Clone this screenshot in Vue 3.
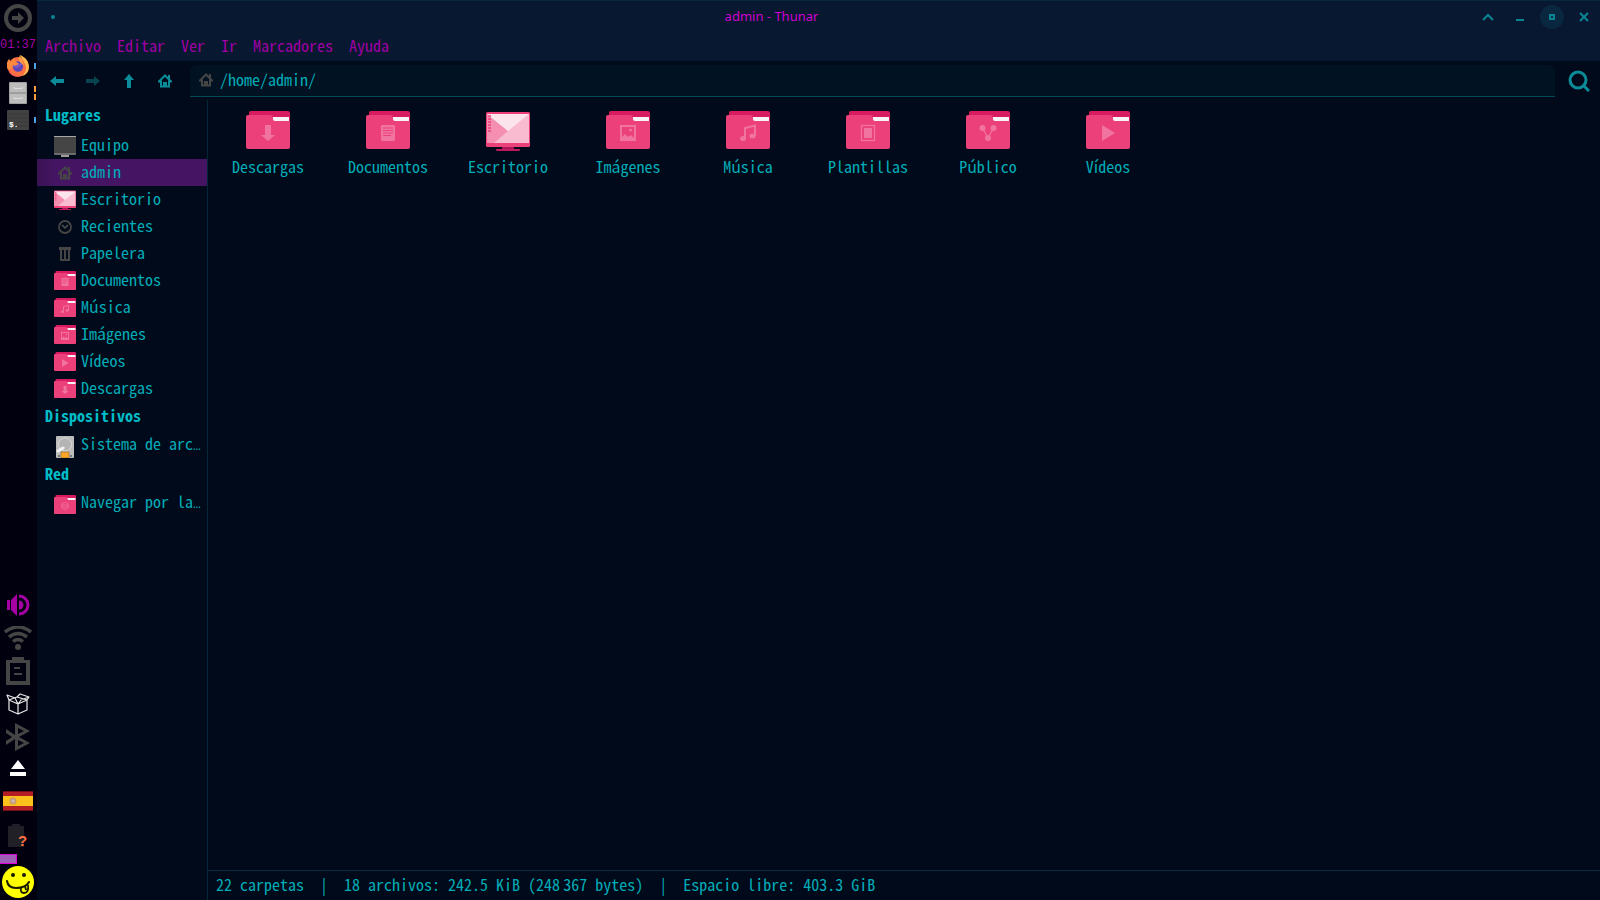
<template>
  <div class="desktop">
    <svg class="sprite" aria-hidden="true">
      <symbol id="folder" viewBox="0 0 44 40">
        <path d="M3 2q0-2 2-2h37q2 0 2 2v12H3z" fill="#d81b60" />
        <path d="M25 6h18v6H27z" fill="#f8f3f6" />
        <path d="M0 6q0-2 2-2h22q2 0 3 2v2q0 2 2 2h13q2 0 2 1v25q0 2-2 2H2q-2 0-2-2z" fill="#ec407a" />
      </symbol>
      <symbol id="g-descargas" viewBox="0 0 44 40">
        <path d="M19 14h6v10h4l-7 6-7-6h4z" fill="#f0749f" />
      </symbol>
      <symbol id="g-documentos" viewBox="0 0 44 40">
        <rect x="15" y="14" width="14" height="16" rx="1" fill="#f0749f" />
        <path d="M17 17h10M17 19.500h10M17 22h10M17 24.500h8" stroke="#ec407a" />
      </symbol>
      <symbol id="g-imagenes" viewBox="0 0 44 40">
        <path d="M14 14h16v16H14zM16 16v10l3-3 3 3 3-2 3 3V16z" fill="#f0749f" fill-rule="evenodd" />
        <circle cx="24.500" cy="19" r="1.500" fill="#f0749f" />
      </symbol>
      <symbol id="g-musica" viewBox="0 0 44 40">
        <path d="M19 27V17l10-2.500V25" fill="none" stroke="#f0749f" stroke-width="2" />
        <ellipse cx="17" cy="27.500" rx="3" ry="2.500" fill="#f0749f" />
        <ellipse cx="26.500" cy="25" rx="3.200" ry="2.500" fill="#f0749f" />
      </symbol>
      <symbol id="g-plantillas" viewBox="0 0 44 40">
        <rect x="15.500" y="14.500" width="13" height="15" fill="none" stroke="#f0749f" stroke-width="1.300" />
        <rect x="18" y="17" width="8" height="10" fill="#f0749f" />
      </symbol>
      <symbol id="g-publico" viewBox="0 0 44 40">
        <path d="M16.500 17L22 27l5.500-10" fill="none" stroke="#f0749f" stroke-width="1.200" />
        <g fill="#f0749f">
          <circle cx="16.500" cy="17" r="3" />
          <circle cx="27.500" cy="17" r="3" />
          <circle cx="22" cy="27" r="3" />
        </g>
      </symbol>
      <symbol id="g-videos" viewBox="0 0 44 40">
        <path d="M16 14l13 8-13 8z" fill="#f0749f" />
      </symbol>
      <symbol id="g-red" viewBox="0 0 44 40">
        <circle cx="22" cy="22" r="7" fill="none" stroke="#f0749f" stroke-width="1.500" />
        <path d="M15 20h14M15 24h14" stroke="#f0749f" stroke-width="1.500" />
      </symbol>
      <symbol id="desktop" viewBox="0 0 44 40">
        <rect x="10" y="38" width="24" height="2" rx="1" fill="#c2185b" />
        <rect x="16" y="35" width="12" height="3" fill="#ad1457" />
        <rect y="1" width="44" height="35" rx="1.500" fill="#ec407a" />
        <path d="M1 3h42v29H1z" fill="#f8bbd0" />
        <path d="M1 3l21 17L8 32H1z" fill="#f48fb1" />
        <path d="M1 3h42L22 20z" fill="#fce4ec" />
        <path d="M2 5h3M2 8h3M2 11h3M2 14h3M2 17h3M2 20h3" stroke="#ec407a" stroke-width="1.500" />
      </symbol>
      <symbol id="computer" viewBox="0 0 22 22">
        <rect y="1" width="22" height="19" rx="1" fill="#6d6d6d" />
        <path d="M0 1h22v1H0z" fill="#a8a8a8" />
        <path d="M0 2h22v16H0z" fill="#454545" />
        <path d="M7 20h8v2H7z" fill="#9e9e9e" />
      </symbol>
      <symbol id="home" viewBox="0 0 14 14">
        <path d="M7 1.500L1 7.500h2v5h3V9h2v3.500h3v-5h2z" fill="none" stroke="currentColor" stroke-width="2" />
        <path d="M10 1h2v4h-2z" fill="currentColor" />
      </symbol>
      <symbol id="recent" viewBox="0 0 14 14">
        <circle cx="7" cy="7" r="6" fill="none" stroke="currentColor" stroke-width="1.800" />
        <path d="M4 5l3 3 3-3" fill="none" stroke="currentColor" stroke-width="1.800" />
      </symbol>
      <symbol id="trash" viewBox="0 0 14 14">
        <path d="M1 0h12v3H1zM2 3h2v9h2V3h2v9h2V3h2v11H2z" fill="currentColor" />
      </symbol>
      <symbol id="disk" viewBox="0 0 22 22">
        <rect x="2" width="18" height="22" rx="1" fill="#bdbdbd" />
        <circle cx="11" cy="8.500" r="6.500" fill="#b4b4b4" stroke="#d9d9d9" />
        <path d="M4 15l5-3" stroke="#f1f1f1" stroke-width="3" stroke-linecap="round" />
        <rect x="7" y="16" width="8" height="6" fill="#ffa726" stroke="#8b6325" stroke-width=".6" />
        <path d="M4 19h2v2H4zM16 19h2v2h-2z" fill="#777" />
      </symbol>
    </svg>

    <aside class="panel">
      <button class="launcher" aria-label="Aplicaciones">
        <svg width="28" height="28" viewBox="0 0 28 28">
          <circle cx="14" cy="14" r="12" fill="none" stroke="#454545" stroke-width="4" />
          <path d="M8 12h6V8l6 6-6 6v-4H8z" fill="#454545" />
        </svg>
      </button>
      <time class="clock">01:37</time>

      <button class="task" aria-label="Firefox">
        <svg width="22" height="22" viewBox="0 0 22 22">
          <circle cx="11" cy="12" r="10" fill="#ff7043" />
          <path d="M1 15A10 10 0 0 1 2 4l2 3 3-4 1 4 4 2-6 4z" fill="#ff8a3d" />
          <path d="M13 0c5 2 9 6 9 12 0 5-3 8-7 9 4-4 5-8 3-12z" fill="#ffb74d" />
          <circle cx="11" cy="11.500" r="5.200" fill="#5e45b8" />
          <path d="M6 9c3-2 6 0 9 0l-3 3c-2 1-4 1-6-1z" fill="#8258c6" />
          <path d="M4 7l4-1 4 3-5 2z" fill="#ff8a3d" />
          <path d="M13 0q-2 4 0 7l4 4z" fill="#ffa143" />
          <path d="M1 14c2 5 7 8 12 7-5 2-11-1-12-7z" fill="#ff4f5e" />
        </svg>
        <span class="marks"><i class="mark blue"></i></span>
      </button>
      <button class="task" aria-label="Archivos">
        <svg width="22" height="22" viewBox="0 0 22 22">
          <rect x="2" width="18" height="22" rx="1" fill="#9e9e9e" />
          <path d="M3 1h16v9H3zM3 12h16v9H3z" fill="#bdbdbd" />
          <path d="M7 5v1.500h8V5M7 15v1.500h8V15" fill="none" stroke="#dedede" />
        </svg>
        <span class="marks"><i class="mark orange"></i><i class="mark orange"></i></span>
      </button>
      <button class="task" aria-label="Terminal">
        <svg width="22" height="20" viewBox="0 0 22 20">
          <rect width="22" height="20" rx="1" fill="#424242" />
          <path d="M0 4h22M0 8h22M0 12h22M0 16h22" stroke="#393939" />
          <text x="2" y="17" class="prompt">$.</text>
        </svg>
        <span class="marks"><i class="mark blue"></i></span>
      </button>

      <div class="tray">
        <button class="tray-item" aria-label="Volumen">
          <svg width="24" height="24" viewBox="0 0 24 24">
            <path d="M1 7h3v10H1zM5 7l6-6v22l-6-6z" fill="#a400a4" />
            <path d="M13 3a9 9 0 0 1 0 18" fill="none" stroke="#a400a4" stroke-width="3" />
            <path d="M13 7.500a4.500 4.500 0 0 1 0 9z" fill="#a400a4" />
          </svg>
        </button>
        <button class="tray-item" aria-label="Wi-Fi">
          <svg width="28" height="24" viewBox="0 0 28 24">
            <g fill="none" stroke="#454545" stroke-width="3.500">
              <path d="M1 6q13-10 26 0" />
              <path d="M5 11q9-7 18 0" />
              <path d="M9 15.500q5-4 10 0" />
            </g>
            <circle cx="14" cy="21" r="3" fill="#454545" />
          </svg>
        </button>
        <button class="tray-item" aria-label="Portapapeles">
          <svg width="24" height="28" viewBox="0 0 24 28">
            <path d="M6 0h12v3h6v25H0V3h6zM4 6v18h16V6z" fill="#454545" fill-rule="evenodd" />
            <path d="M8 11h6M8 17h8" stroke="#454545" stroke-width="2" />
          </svg>
        </button>
        <button class="tray-item" aria-label="Paquetes">
          <svg width="24" height="22" viewBox="0 0 24 22" fill="none" stroke="#e8e8e8" stroke-width="1.200" stroke-linejoin="round">
            <path d="M3 7l9 4 9-4v10l-9 4-9-4zM12 11v10M3 7L1 2l8 3 3 6M3 7l8-3 10 3M11 4l3-3 9 3-2 3M12 11l3-4 8-3" />
          </svg>
        </button>
        <button class="tray-item" aria-label="Bluetooth">
          <svg width="24" height="28" viewBox="0 0 24 28">
            <path d="M0 6l9 6V0l15 8-11 6 11 6-15 8V16l-9 6v-4l6-4-6-4zM12 5v6l6-3zM12 17v6l6-3z" fill="#454545" fill-rule="evenodd" />
          </svg>
        </button>
        <button class="tray-item" aria-label="Expulsar">
          <svg width="16" height="20" viewBox="0 0 16 20">
            <path d="M8 0l7 9H1zM0 12h16v4H0z" fill="#fff" />
          </svg>
        </button>
        <button class="tray-item" aria-label="Teclado español">
          <svg width="30" height="24" viewBox="0 0 30 24">
            <rect width="30" height="20" fill="#b51d24" />
            <rect y="5" width="30" height="10" fill="#fcc21b" />
            <path d="M0 0h30v1H0zM0 19h30v1H0z" fill="#740f1a" />
            <circle cx="10" cy="10" r="3.500" fill="#c99a70" />
            <circle cx="10" cy="10" r="1.800" fill="#d5b7b0" />
          </svg>
        </button>
        <button class="tray-item" aria-label="Batería">
          <svg width="20" height="24" viewBox="0 0 20 24">
            <path d="M4 0h8v2h4v21H0V2h4z" fill="#202026" />
            <text x="10" y="22" class="question">?</text>
          </svg>
        </button>
      </div>
      <span class="pager"></span>
      <button class="smiley" aria-label="Menú">
        <svg width="32" height="32" viewBox="0 0 32 32">
          <circle cx="16" cy="16" r="16" fill="#ffff00" />
          <circle cx="11" cy="9" r="2" fill="#1a1a00" />
          <circle cx="22" cy="9" r="2" fill="#1a1a00" />
          <path d="M5 15q1 7 9 7 10 0 13-6" fill="none" stroke="#1a1a00" stroke-width="2" stroke-linecap="round" />
          <path d="M19 22q-1 5 3 5 5 0 4-8M23 20l1 4" fill="none" stroke="#1a1a00" stroke-width="1.800" />
        </svg>
      </button>
    </aside>

    <div class="window">
      <header class="titlebar">
        <span class="dot"></span>
        <h1 class="title">admin - Thunar</h1>
        <div class="controls">
          <button aria-label="Enrollar"><svg viewBox="0 0 24 24"><path d="M7 15l5-5 5 5" /></svg></button>
          <button aria-label="Minimizar"><svg viewBox="0 0 24 24"><path d="M8 15h8" /></svg></button>
          <button class="round" aria-label="Maximizar"><svg viewBox="0 0 24 24"><path d="M10 10h4v4h-4z" /></svg></button>
          <button aria-label="Cerrar"><svg viewBox="0 0 24 24"><path d="M8 8l8 8M16 8l-8 8" /></svg></button>
        </div>
      </header>

      <nav class="menubar">
        <button v-for="item in menu" :key="item">{{ item }}</button>
      </nav>

      <div class="toolbar">
        <button class="tool" aria-label="Atrás">
          <svg width="14" height="14" viewBox="0 0 14 14"><path d="M0 7l6-5v3h8v4H6v3z" fill="currentColor" /></svg>
        </button>
        <button class="tool off" aria-label="Adelante">
          <svg width="14" height="14" viewBox="0 0 14 14"><path d="M14 7L8 2v3H0v4h8v3z" fill="currentColor" /></svg>
        </button>
        <button class="tool" aria-label="Subir">
          <svg width="14" height="14" viewBox="0 0 14 14"><path d="M7 0l5 6H9v8H5V6H2z" fill="currentColor" /></svg>
        </button>
        <button class="tool" aria-label="Inicio">
          <svg width="14" height="14"><use href="#home" /></svg>
        </button>
        <label class="location">
          <svg width="14" height="14"><use href="#home" /></svg>
          <input v-model="path" type="text" aria-label="Ubicación" />
        </label>
        <button class="search" aria-label="Buscar">
          <svg width="22" height="22" viewBox="0 0 22 22">
            <circle cx="10" cy="10" r="8" fill="none" stroke="currentColor" stroke-width="3" />
            <path d="M15 15l6 6" stroke="currentColor" stroke-width="3" />
          </svg>
        </button>
      </div>

      <div class="body">
        <nav class="sidebar">
          <section v-for="group in places" :key="group.title">
            <h2>{{ group.title }}</h2>
            <button
              v-for="place in group.items"
              :key="place.name"
              :class="['place', { selected: place.name === current }]"
              @click="current = place.name"
            >
              <span class="place-icon">
                <svg v-if="place.glyph" class="folder"><use href="#folder" /><use :href="'#g-' + place.glyph" /></svg>
                <svg v-else :class="place.icon"><use :href="'#' + place.icon" /></svg>
              </span>
              <span class="place-name">{{ place.name }}<span v-if="place.cut" class="more">…</span></span>
            </button>
          </section>
        </nav>

        <div class="content">
          <main class="files">
            <button v-for="file in files" :key="file.name" class="file">
              <svg width="44" height="40">
                <use :href="file.glyph ? '#folder' : '#desktop'" />
                <use v-if="file.glyph" :href="'#g-' + file.glyph" />
              </svg>
              <span>{{ file.name }}</span>
            </button>
          </main>
          <footer class="status">{{ status }}</footer>
        </div>
      </div>
    </div>
  </div>
</template>

<script setup>
import { ref } from 'vue'

const path = ref('/home/admin/')
const current = ref('admin')

const menu = ['Archivo', 'Editar', 'Ver', 'Ir', 'Marcadores', 'Ayuda']

const places = [
  {
    title: 'Lugares',
    items: [
      { name: 'Equipo', icon: 'computer' },
      { name: 'admin', icon: 'home' },
      { name: 'Escritorio', icon: 'desktop' },
      { name: 'Recientes', icon: 'recent' },
      { name: 'Papelera', icon: 'trash' },
      { name: 'Documentos', glyph: 'documentos' },
      { name: 'Música', glyph: 'musica' },
      { name: 'Imágenes', glyph: 'imagenes' },
      { name: 'Vídeos', glyph: 'videos' },
      { name: 'Descargas', glyph: 'descargas' }
    ]
  },
  { title: 'Dispositivos', items: [{ name: 'Sistema de arc', icon: 'disk', cut: true }] },
  { title: 'Red', items: [{ name: 'Navegar por la', glyph: 'red', cut: true }] }
]

const files = [
  { name: 'Descargas', glyph: 'descargas' },
  { name: 'Documentos', glyph: 'documentos' },
  { name: 'Escritorio' },
  { name: 'Imágenes', glyph: 'imagenes' },
  { name: 'Música', glyph: 'musica' },
  { name: 'Plantillas', glyph: 'plantillas' },
  { name: 'Público', glyph: 'publico' },
  { name: 'Vídeos', glyph: 'videos' }
]

const status = '22 carpetas  |  18 archivos: 242.5 KiB (248\u2009367 bytes)  |  Espacio libre: 403.3 GiB'
</script>

<style>
body {
  background: #000a1a;
}
</style>

<style scoped>
.desktop {
  display: flex;
  min-height: 100vh;
  background: #000a1a;
  color: #00adb8;
  font-family: "Noto Sans Mono CJK JP", "Liberation Mono", monospace;
  font-size: 16px;
  line-height: 24px;
}

.sprite {
  position: absolute;
  width: 0;
  height: 0;
}

button {
  display: flex;
  align-items: center;
  justify-content: center;
  padding: 0;
  border: 0;
  background: none;
  color: inherit;
  font: inherit;
}

svg {
  display: block;
  flex: none;
}

/* panel */
.panel {
  flex: none;
  display: flex;
  flex-direction: column;
  align-items: center;
  box-sizing: border-box;
  width: 37px;
  padding-right: 1px;
  background: #01000e;
}

.launcher {
  height: 36px;
}

.clock {
  height: 16px;
  line-height: 18px;
  color: #a400a4;
  font-family: "Liberation Mono", monospace;
  font-size: 12px;
}

.task {
  position: relative;
  width: 100%;
  height: 27px;
}

.marks {
  position: absolute;
  right: 0;
  display: flex;
  flex-direction: column;
  gap: 2px;
}

.mark {
  width: 2px;
  height: 6px;
}

.blue {
  background: #4aa3e8;
}

.orange {
  background: #ffa040;
}

.prompt {
  fill: #fff;
  font: bold 8px "Liberation Mono", monospace;
}

.question {
  fill: #ff7043;
  font: bold 15px "Liberation Sans", sans-serif;
}

.tray {
  margin-top: auto;
}

.tray-item {
  width: 35px;
  height: 33px;
}

.pager {
  align-self: flex-start;
  box-sizing: border-box;
  width: 17px;
  height: 10px;
  margin: 2px 0;
  border: 1px solid #e000d8;
  border-left: 0;
  background: #9c5fb5;
}

.smiley {
  margin-bottom: 2px;
}

/* window */
.window {
  flex: 1;
  min-width: 0;
  display: flex;
  flex-direction: column;
}

.titlebar {
  display: flex;
  align-items: center;
  box-sizing: border-box;
  height: 32px;
  padding: 0 4px 0 14px;
  border-top: 1px solid #06283e;
  background: #081830;
}

.dot {
  width: 4px;
  height: 4px;
  border-radius: 2px;
  background: #0b8494;
}

.title {
  flex: 1;
  margin: 0;
  padding: 0 0 2px 12px;
  text-align: center;
  color: #d000d0;
  font: 13px/20px "Noto Sans", sans-serif;
}

.controls {
  display: flex;
  gap: 8px;
}

.controls button {
  width: 24px;
  height: 24px;
  border-radius: 12px;
}

.controls .round {
  background: #0a2740;
}

.controls svg {
  width: 24px;
  height: 24px;
  fill: none;
  stroke: #0b8494;
  stroke-width: 2;
}

.menubar {
  display: flex;
  gap: 16px;
  height: 29px;
  padding-left: 8px;
  background: #081830;
  color: #a000a4;
}

.menubar button {
  height: 25px;
}

.toolbar {
  display: flex;
  align-items: center;
  height: 39px;
  padding-left: 2px;
}

.tool {
  width: 36px;
  height: 36px;
  color: #0b8c98;
}

.off {
  color: #06434f;
}

.location {
  flex: 1;
  display: flex;
  align-items: center;
  gap: 7px;
  box-sizing: border-box;
  height: 32px;
  margin-left: 7px;
  padding-left: 9px;
  border-bottom: 1px solid #034a58;
  border-radius: 6px 6px 0 0;
  background: #011223;
  color: #454545;
}

.location input {
  flex: 1;
  min-width: 0;
  padding: 0 0 2px;
  border: 0;
  outline: 0;
  background: none;
  color: #00adb8;
  font: inherit;
}

.search {
  width: 45px;
  padding-left: 3px;
  color: #0b8c98;
}

.body {
  flex: 1;
  display: flex;
}

.sidebar {
  flex: none;
  box-sizing: border-box;
  width: 171px;
  padding-top: 1px;
  border-right: 1px solid #052638;
}

.sidebar h2 {
  margin: 0;
  padding: 0 0 4px 8px;
  color: #00bcc8;
  font-size: 16px;
  font-weight: bold;
  line-height: 27px;
}

.place {
  justify-content: flex-start;
  gap: 5px;
  width: 100%;
  height: 27px;
  padding: 0 6px 0 17px;
}

.place.selected {
  background: linear-gradient(to right, #3a1254, #451564 20px);
}

.place-icon {
  flex: none;
  display: flex;
  align-items: center;
  justify-content: center;
  width: 22px;
  height: 22px;
  color: #454545;
}

.place-icon svg {
  width: 22px;
  height: 22px;
}

.place-icon .folder,
.place-icon .desktop {
  min-height: 0;
  height: 20px;
  background: none;
}

.place-icon .home,
.place-icon .recent,
.place-icon .trash {
  width: 14px;
  height: 14px;
}

.place-name {
  padding-bottom: 3px;
  white-space: nowrap;
}

.more {
  font-family: "Liberation Mono", monospace;
  font-size: 13px;
}

.content {
  flex: 1;
  min-width: 0;
  display: flex;
  flex-direction: column;
}

.files {
  flex: 1;
  display: flex;
  flex-wrap: wrap;
  align-content: flex-start;
  padding-top: 11px;
}

.file {
  flex-direction: column;
  gap: 3px;
  width: 120px;
}

.status {
  height: 29px;
  padding-left: 8px;
  border-top: 1px solid #052f3d;
  line-height: 26px;
  white-space: pre;
}
</style>
